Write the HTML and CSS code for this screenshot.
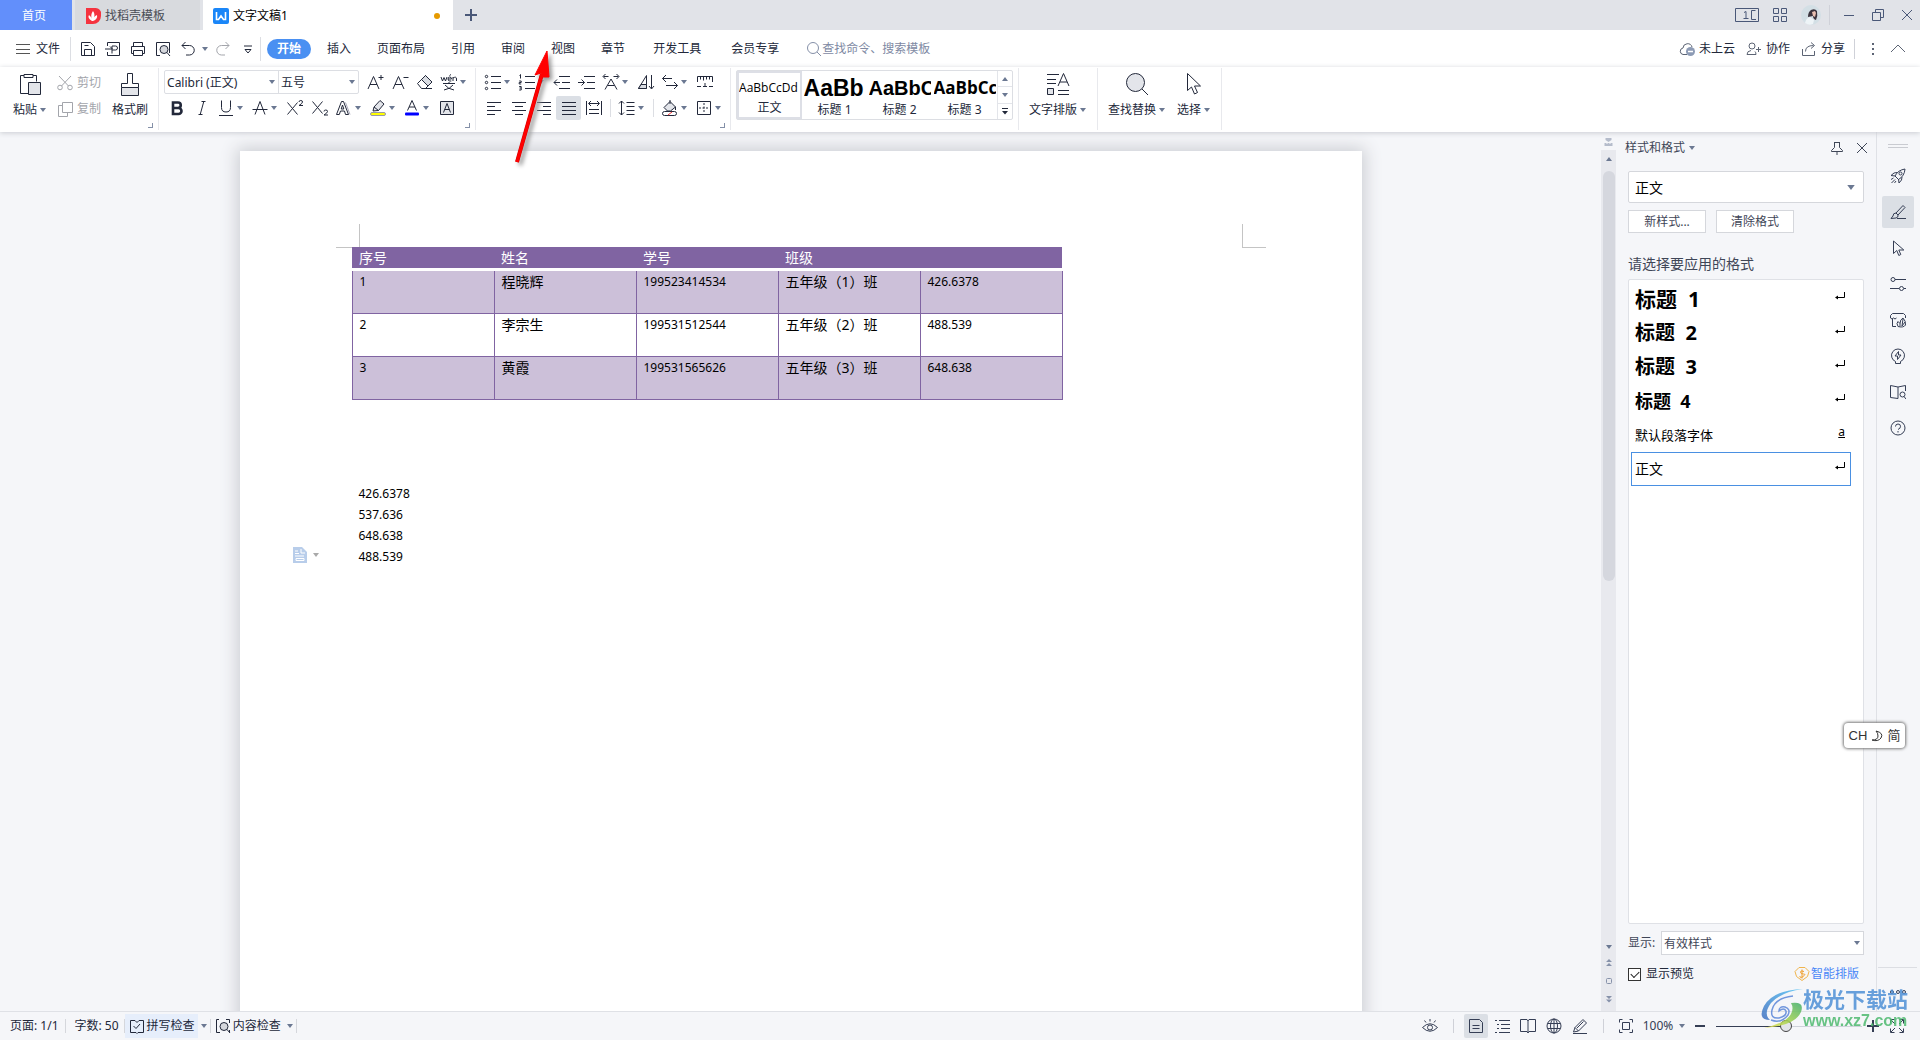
FILE: index.html
```html
<!DOCTYPE html>
<html lang="zh-CN">
<head>
<meta charset="utf-8">
<title>文字文稿1</title>
<link rel="stylesheet" href="styles.css">
</head>
<body>
<svg class="sprite" aria-hidden="true">
  <symbol id="caret" viewBox="0 0 6 4"><path d="M0 0h6L3 4z" fill="currentColor"/></symbol>
  <symbol id="menu" viewBox="0 0 14 12"><path d="M0 1.500h14M0 6.500h14M0 10.500h14"/></symbol>
  <symbol id="save" viewBox="0 0 16 16"><path d="M1.500 1.500h9l4 4v9h-13zM4.500 14.500V8.500h7v6M4.500 4.500h4"/></symbol>
  <symbol id="pdf" viewBox="0 0 16 16"><path d="M2.500 5V1.500h12v13h-12V11M0 8h7M5 5.500L7.500 8M7 12.500V5h3.500a2 2 0 0 1 0 4H7"/></symbol>
  <symbol id="print" viewBox="0 0 16 16"><path d="M3.500 5.500v-4h9v4M3.500 12.500h-2v-7h13v7h-2M3.500 9.500h9v5h-9z"/></symbol>
  <symbol id="preview" viewBox="0 0 16 16"><path d="M5 14.500H1.500v-13h13V12"/><circle cx="9" cy="8.500" r="4" fill="#d5d7dc"/><path d="M12 11.500l3 3.500"/></symbol>
  <symbol id="undo" viewBox="0 0 16 16"><path d="M5.500 1L2 4.500 5.500 8M2 4.500h7.500a4.500 4.500 0 0 1 0 9.500H6"/></symbol>
  <symbol id="redo" viewBox="0 0 16 16"><path d="M10.500 1L14 4.500 10.500 8M14 4.500H6.500a4.500 4.500 0 0 0 0 9.500H10"/></symbol>
  <symbol id="more" viewBox="0 0 10 10"><path d="M1 2h8M2 5.500h6L5 9z"/></symbol>
  <symbol id="search" viewBox="0 0 16 16"><circle cx="7" cy="7" r="5.500"/><path d="M11 11l4 4"/></symbol>
  <symbol id="cloud" viewBox="0 0 16 16"><path d="M8 13.500H4a3.300 3.300 0 0 1 0-6.500 4.600 4.600 0 0 1 9-1"/><circle cx="11.500" cy="10.500" r="4.500" fill="#8d9bb5" stroke="none"/><path d="M9 10.500h5" stroke="#fff" stroke-width="1.500"/></symbol>
  <symbol id="collab" viewBox="0 0 16 16"><circle cx="6" cy="5" r="3"/><path d="M5 9.500q-4 .5-4 4h9q0-2-1-3M10 8.500h5M12.500 6v5"/></symbol>
  <symbol id="share" viewBox="0 0 16 16"><path d="M1.500 8v6.500h12V10M4.500 10.500q0-6 8-6M10 1.500l3.500 3-3.500 3"/></symbol>
  <symbol id="plus" viewBox="0 0 12 12"><path d="M6 0v12M0 6h12" stroke-width="2"/></symbol>
  <symbol id="close" viewBox="0 0 12 12"><path d="M1 1l10 10M11 1L1 11"/></symbol>
  <symbol id="paste" viewBox="0 0 24 24"><path d="M6 3.500H2.500v18h8M15 3.500h3.500v6M6 2.500h9v3H6z"/><path d="M10.500 10.500h12v12h-12z" fill="#e3e5ea"/></symbol>
  <symbol id="cut" viewBox="0 0 16 16"><path d="M2 1l9.500 10M14 1L4.500 11"/><circle cx="3" cy="12.500" r="2.300"/><circle cx="13" cy="12.500" r="2.300"/></symbol>
  <symbol id="copy" viewBox="0 0 16 16"><path d="M5.500 1.500h10v10h-10zM5 4.500H1.500v11h9V12"/></symbol>
  <symbol id="painter" viewBox="0 0 24 24"><path d="M3.500 15.500h17v8h-17z" fill="#e3e5ea"/><path d="M3.500 15.500v-4h6v-10h5v10h6v4"/></symbol>
  <symbol id="grow" viewBox="0 0 18 18"><path d="M2 16L7.500 3.500 13 16M4 11.500h7M12.500 4.500h5M15 2v5"/></symbol>
  <symbol id="shrink" viewBox="0 0 18 18"><path d="M2 16L7.500 3.500 13 16M4 11.500h7M12.500 4.500h5"/></symbol>
  <symbol id="eraser" viewBox="0 0 18 18"><path d="M1.500 10.500l8-8 6.500 6.500-6.500 6.500H5.500z"/><path d="M5.500 6.500L9.500 2.500 16 9l-4 4z" fill="#d9dce2"/><path d="M8 15.500h8"/></symbol>
  <symbol id="pinyin" viewBox="0 0 18 18"><path d="M1 4l1.500 4L4 4.500 5.500 8 7 4M8 6h3.500q0-2-1.800-2T8 6t1.800 2h1.500M9.500 2.500l1.500-1M13 8V4M13 5q3.500-2 3.500 1v2M3 10.500h12M9 9v1.500M5 12q3 4 9 5M13 12q-3 4-9 5"/></symbol>
  <symbol id="bold" viewBox="0 0 18 18"><path d="M5 3.500h5a2.700 2.700 0 0 1 0 5.500H5zM5 9h5.500a3 3 0 0 1 0 6H5z" stroke-width="2.600"/></symbol>
  <symbol id="italic" viewBox="0 0 18 18"><path d="M8.500 2.500h4M5.500 15.500h4M10.800 2.500L7.200 15.500"/></symbol>
  <symbol id="underline" viewBox="0 0 18 18"><path d="M4.500 1.500v7q0 4.500 4.500 4.500t4.500-4.500v-7M2 16.500h14"/></symbol>
  <symbol id="strike" viewBox="0 0 18 18"><path d="M4 15.500L9 2.500l5 13M1.500 10.500h15"/></symbol>
  <symbol id="sup" viewBox="0 0 18 18"><path d="M1.500 3.500l10 12M11.500 3.500l-10 12M13 3q0-1.500 1.800-1.500T16.500 3t-3.500 3.500h4"/></symbol>
  <symbol id="sub" viewBox="0 0 18 18"><path d="M1.500 2.500l10 12M11.500 2.500l-10 12M13 12.500q0-1.500 1.800-1.500t1.700 1.500-3.500 3.500h4"/></symbol>
  <symbol id="outline" viewBox="0 0 18 18"><path d="M1.500 15.500l5-13h2l5 13h-3L9.500 12h-4l-1.200 3.500zM6.200 10h2.600L7.500 6z"/><path d="M10.500 3.500l4.500 12" stroke="#aab"/></symbol>
  <symbol id="highlight" viewBox="0 0 18 18"><path d="M4 12l1-4L11 1.500 15 5 9.500 11.500zM5 8l4.500 3.500" fill="#e3e5ea"/><rect x="1.500" y="13.500" width="15" height="3" rx="1.500" fill="#ff0" stroke="#99a"/></symbol>
  <symbol id="color" viewBox="0 0 18 18"><path d="M4.500 11.500L9 1.500l4.500 10M6 8h6"/><rect x="2" y="13.500" width="14" height="3" rx="1" fill="#00f" stroke="none"/></symbol>
  <symbol id="charbox" viewBox="0 0 18 18"><path d="M2.500 2.500h13v13h-13z" fill="#e3e5ea"/><path d="M5.500 13.500L9 4.500l3.500 9M6.800 10.500h4.500"/></symbol>
  <symbol id="bullets" viewBox="0 0 18 18"><path d="M7 3.500h10M7 9.500h10M7 15.500h10"/><circle cx="2.500" cy="3.500" r="1.200"/><circle cx="2.500" cy="9.500" r="1.200"/><circle cx="2.500" cy="15.500" r="1.200"/></symbol>
  <symbol id="numbers" viewBox="0 0 18 18"><path d="M7 3.500h10M7 9.500h10M7 15.500h10M1.500 2.500l1-1v4M1.200 8h2v1.500h-2V11h2M1.200 13.500h2V17h-2M1.500 15h1.700"/></symbol>
  <symbol id="outdent" viewBox="0 0 18 18"><path d="M6 3.500h11M9 9.500h8M6 15.500h11M7 9.500H1M4 6.500l-3 3 3 3"/></symbol>
  <symbol id="indent" viewBox="0 0 18 18"><path d="M6 3.500h11M9 9.500h8M6 15.500h11M0 9.500h6.500M3.500 6.500l3 3-3 3"/></symbol>
  <symbol id="scale" viewBox="0 0 18 18"><path d="M1.500 3.500h5M3.500 1L1 3.500 3.500 6M11.500 3.500h5M14.500 1L17 3.500 14.500 6M3 16.500L9 6l6 10.500M5.500 12.500h7"/></symbol>
  <symbol id="sort" viewBox="0 0 18 18"><path d="M1.500 15.500L9.500 2.500v13z"/><path d="M4 11.500h5.500v4H1.500z" fill="#d9dce2"/><path d="M14.500 2v13.500M12 13l2.500 3 2.500-3"/></symbol>
  <symbol id="wrap" viewBox="0 0 18 18"><path d="M5 2L1.500 5.500 5 9M1.500 5.500H11M5 12.500h11.500M13 9l3.500 3.500L13 16"/></symbol>
  <symbol id="tabstop" viewBox="0 0 18 18"><path d="M1.500 9V3.500h15V9M4.500 3.500v3M7.500 3.500v4M10.500 3.500v3M13.500 3.500v3M1 13.500h4M13 13.500h4M7 13.500h4M9 10v3"/></symbol>
  <symbol id="left" viewBox="0 0 18 18"><path d="M2 3.500h14M2 7.500h8M2 11.500h14M2 15.500h8"/></symbol>
  <symbol id="center" viewBox="0 0 18 18"><path d="M2 3.500h14M5 7.500h8M2 11.500h14M5 15.500h8"/></symbol>
  <symbol id="right" viewBox="0 0 18 18"><path d="M2 3.500h14M8 7.500h8M2 11.500h14M8 15.500h8"/></symbol>
  <symbol id="justify" viewBox="0 0 18 18"><path d="M2 3.500h14M2 7.500h14M2 11.500h14M2 15.500h14"/></symbol>
  <symbol id="distribute" viewBox="0 0 18 18"><path d="M1.500 2v14M16.500 2v14M4 4.500h10M6 2L3.500 4.500 6 7M12 2l2.500 2.500L12 7M4 10.500h10M4 14.500h10"/></symbol>
  <symbol id="spacing" viewBox="0 0 18 18"><path d="M3.500 2v14M1 4.500L3.500 2 6 4.500M1 13.500L3.500 16 6 13.500M8.500 3.500h8M8.500 7.500h8M8.500 11.500h8M8.500 15.500h8"/></symbol>
  <symbol id="shade" viewBox="0 0 18 18"><path d="M3 8.500l6-6 5.500 5.500-5 4h-3z" fill="#e3e5ea"/><path d="M9 1v4M14.500 8v3"/><rect x="1.500" y="12.500" width="14" height="4" rx="2" fill="#fff"/><path d="M7 16l4-3" stroke="#e33"/></symbol>
  <symbol id="borders" viewBox="0 0 18 18"><path d="M2.500 2.500h13v13h-13z"/><path d="M9 4v10M4 9h10" stroke-dasharray="2 1.500"/></symbol>
  <symbol id="typeset" viewBox="0 0 24 24"><path d="M1 2.500h12M1 7.500h9M1 11.500h9M12 14L17.500 1.500 23 14M14 10h7M12 18.500h11M12 22.500h11"/><path d="M1.500 16.500h6v6h-6z" fill="#e3e5ea"/></symbol>
  <symbol id="find" viewBox="0 0 24 24"><circle cx="10.500" cy="10.500" r="9" fill="#e3e5ea"/><path d="M17 17l6 6"/></symbol>
  <symbol id="pointer" viewBox="0 0 24 24"><path d="M5.500 1.500v17l4-3.500 3 7 3-1.500-3-6.500h6z"/></symbol>
  <symbol id="pin" viewBox="0 0 14 14"><path d="M4 1.500h6M4.500 1.500v5l-3 3v1h11v-1l-3-3v-5M7 10.500V14"/></symbol>
  <symbol id="rocket" viewBox="0 0 16 16"><path d="M5 8q3-6 10-7-.5 7-6.500 10.500zM5 8L1 7.500 4 5l3-.5M8.500 11l.5 4 2.500-3 .5-3M1 11.500L3.500 10M1.500 15L5 11.500M4.500 15L6 13"/><circle cx="10.500" cy="5.500" r="1.500"/></symbol>
  <symbol id="pen" viewBox="0 0 16 16"><path d="M6 9L13 1.500l2 2L8 11zM6 9q-3 0-3 3l-2 2.500 5-.5q2.500-.5 2-3M7 14.500h9"/></symbol>
  <symbol id="pencil" viewBox="0 0 16 16"><path d="M1.500 14L3 9.500 11 1.500l3.500 3.500-8 8zM3 9.500L6.500 13M5 10l6.500-6.500M1 15.500h14"/></symbol>
  <symbol id="cursor" viewBox="0 0 16 16"><path d="M3.500 1v12.500l3.300-3 2 5 2-1-2-4.500h5z"/></symbol>
  <symbol id="sliders" viewBox="0 0 16 16"><path d="M5 3.500h11M0 12.500h9M14 12.500h2"/><circle cx="3" cy="3.500" r="2"/><circle cx="11.500" cy="12.500" r="2"/></symbol>
  <symbol id="gallery" viewBox="0 0 16 16"><path d="M6 14.500H2.500V7M15.500 6V3.500l-2-2h-11l-2 2V6q1.500 2 3 0 1.500 2 3 0"/><path d="M8 14.500q-2-3.500 0-5l2 2q0-4 3-5.500 3 3 2.500 7-2 3-7.500 1.500zM10 11.500v3M13 7l-1 7M15 10l-3 4"/></symbol>
  <symbol id="bulb" viewBox="0 0 16 16"><path d="M5.500 15.500v-2a6.500 6.500 0 1 1 5 0v2zM8.500 3.500L5 8h2.500v3.500L11 7H8.500z"/></symbol>
  <symbol id="bookfind" viewBox="0 0 16 16"><path d="M8 14.500L.5 13.500v-12L8 3l7.500-1.500V7M8 3v11.500"/><circle cx="12.500" cy="10.500" r="2.500"/><path d="M14 12.500l2 2.500"/></symbol>
  <symbol id="help" viewBox="0 0 16 16"><circle cx="8" cy="8" r="7"/><path d="M5.500 6.500q0-2.500 2.500-2.500t2.500 2.300T8 9.500M8 11v1.500"/></symbol>
  <symbol id="spell" viewBox="0 0 16 16"><path d="M6 2.500H1.500v12H7l1 1 1-1h5.500v-12H10L8 4.500 6 2.500M4.500 8L7 10.500l4-4.500"/></symbol>
  <symbol id="content" viewBox="0 0 16 16"><path d="M4 1.500H1.500v13H5M11 1.500h3.500V5M14.500 12v2.500"/><circle cx="9" cy="8.500" r="4" fill="#d5d7dc"/><path d="M12 11.500l3 3.500"/></symbol>
  <symbol id="eye" viewBox="0 0 16 16"><path d="M.5 9.500Q8 2 15.500 9.500 8 17 .5 9.500zM8 1v2.500M2.500 2.500L4 4.500M13.500 2.500L12 4.500"/><circle cx="8" cy="9.500" r="2.500"/></symbol>
  <symbol id="doc" viewBox="0 0 16 16"><path d="M1.500 1.500h10l3 3v10h-13zM4.500 7.500h7M4.500 10.500h7"/></symbol>
  <symbol id="list" viewBox="0 0 16 16"><path d="M1 2.500h2M5 2.500h11M3 6.500h2M7 6.500h9M3 10.500h2M7 10.500h9M1 14.500h2M5 14.500h11"/></symbol>
  <symbol id="book" viewBox="0 0 16 16"><path d="M8 3v12l-1-1.500H.5v-12H7L8 3l1-1.500h6.500v12H9L8 15"/></symbol>
  <symbol id="globe" viewBox="0 0 16 16"><circle cx="8" cy="8" r="7"/><ellipse cx="8" cy="8" rx="3.500" ry="7"/><path d="M8 1v14M1.500 5.500h13M1.500 10.500h13"/></symbol>
  <symbol id="frame" viewBox="0 0 16 16"><path d="M1.500 4.500v-3h3M11.500 1.500h3v3M14.500 11.500v3h-3M4.500 14.500h-3v-3M4.500 4.500h7v7h-7z"/></symbol>
  <symbol id="full" viewBox="0 0 16 16"><path d="M1.500 5.500v-4h4M10.500 1.500h4v4M14.500 10.500v4h-4M5.500 14.500h-4v-4M2 2l4 4M14 2l-4 4M14 14l-4-4M2 14l4-4"/></symbol>
  <symbol id="return" viewBox="0 0 10 10"><path d="M9.500 1v5.500H1"/><path d="M0 6.500L3 4.500v4z" fill="currentColor" stroke="none"/></symbol>
</svg>

<header class="titlebar">
  <button class="tab home">首页</button>
  <button class="tab store">
    <svg class="i16" viewBox="0 0 16 16"><path d="M1 0h9a6 6 0 0 1 6 8 8 8 0 0 1-8 8H1z" fill="#f5333f" stroke="none"/><path d="M7 13Q2 10 4 7q2 1 3 5Q5 7 8 3q3 4 0 9 1-4 4-5 1 4-4 6z" fill="#fff" stroke="none"/></svg>
    找稻壳模板</button>
  <button class="tab current">
    <svg class="i16" viewBox="0 0 16 16"><rect width="16" height="16" rx="2" fill="#1a86f8" stroke="none"/><path d="M3.500 4v7.500h2L8 8l2.500 3.500h2V4" stroke="#fff" stroke-width="1.600"/></svg>
    文字文稿1<span class="dirty"></span></button>
  <button class="newtab" aria-label="新建"><svg class="i12"><use href="#plus"/></svg></button>
  <div class="window-tools">
    <button aria-label="窗口"><svg class="i24" viewBox="0 0 24 14"><path d="M.5.500h23v13H.5zM9 4.500l2-1v7M8.500 10.500h5M20.500 2.500h-4v9h4M19 11.500h2"/></svg></button>
    <button aria-label="应用"><svg class="i14" viewBox="0 0 14 14"><path d="M.5.500h5v5h-5zM8.500.500h5v5h-5zM.5 8.500h5v5h-5zM8.500 8.500h5v5h-5z"/></svg></button>
    <button aria-label="账号"><svg class="i20" viewBox="0 0 20 20"><circle cx="10" cy="10" r="10" fill="#d3dfe5" stroke="none"/><path d="M7 12q0-5 3-7 4-2 6 1 1 5-1 9-3-1-3-4z" fill="#39333c" stroke="none"/><path d="M11 7l3-1 1 2-1 4-2-1z" fill="#e8bfb0" stroke="none"/><path d="M4 18q1-5 5-6l4 3-1 4q-4 2-8-1z" fill="#eef4f7" stroke="none"/></svg></button>
    <span class="sep"></span>
    <button aria-label="最小化"><svg class="i12" viewBox="0 0 12 12"><path d="M1 6.500h10"/></svg></button>
    <button aria-label="还原"><svg class="i12" viewBox="0 0 12 12"><path d="M.5 3.500h8v8h-8zM3.500 3.500v-3h8v8h-3"/></svg></button>
    <button aria-label="关闭"><svg class="i12"><use href="#close"/></svg></button>
  </div>
</header>

<nav class="menubar">
  <button class="file"><svg class="menu-icon"><use href="#menu"/></svg>文件</button>
  <div class="quick">
    <button aria-label="保存"><svg class="i16"><use href="#save"/></svg></button>
    <button aria-label="输出为PDF"><svg class="i16"><use href="#pdf"/></svg></button>
    <button aria-label="打印"><svg class="i16"><use href="#print"/></svg></button>
    <button aria-label="打印预览"><svg class="i16"><use href="#preview"/></svg></button>
    <button aria-label="撤销"><svg class="i16"><use href="#undo"/></svg></button>
    <button class="narrow" aria-label="撤销列表"><svg class="caret"><use href="#caret"/></svg></button>
    <button class="disabled" aria-label="恢复"><svg class="i16"><use href="#redo"/></svg></button>
    <button aria-label="更多"><svg class="i10"><use href="#more"/></svg></button>
  </div>
  <div class="tabs">
    <button class="active">开始</button><button>插入</button><button>页面布局</button><button>引用</button><button>审阅</button><button>视图</button><button>章节</button><button class="wide">开发工具</button><button class="wide">会员专享</button>
  </div>
  <label class="search"><svg class="i16"><use href="#search"/></svg><input type="text" placeholder="查找命令、搜索模板"></label>
  <div class="account">
    <button class="link"><svg class="i16"><use href="#cloud"/></svg>未上云</button>
    <button class="link"><svg class="i16"><use href="#collab"/></svg>协作</button>
    <button><svg class="i16"><use href="#share"/></svg>分享</button>
    <span class="sep"></span>
    <button aria-label="更多"><svg class="dots" viewBox="0 0 4 14"><path d="M1 1h2v2H1zM1 6h2v2H1zM1 11h2v2H1z" fill="currentColor" stroke="none"/></svg></button>
    <button aria-label="收起"><svg class="i14" viewBox="0 0 14 14"><path d="M0 10l7-7 7 7"/></svg></button>
  </div>
</nav>

<section class="ribbon">
  <div class="group clipboard">
    <button class="big"><svg class="i24"><use href="#paste"/></svg><span>粘贴<svg class="caret"><use href="#caret"/></svg></span></button>
    <div class="stack">
      <button class="small disabled"><svg class="i16"><use href="#cut"/></svg>剪切</button>
      <button class="small disabled"><svg class="i16"><use href="#copy"/></svg>复制</button>
    </div>
    <button class="big"><svg class="i24"><use href="#painter"/></svg><span>格式刷</span></button>
    <i class="corner"></i>
  </div>
  <div class="group tools">
    <div class="row">
      <div class="fontbox">
        <span class="select font-name"><select aria-label="字体"><option>Calibri (正文)</option></select><svg class="caret"><use href="#caret"/></svg></span>
        <span class="select font-size"><select aria-label="字号"><option>五号</option></select><svg class="caret"><use href="#caret"/></svg></span>
      </div>
      <button class="tool" aria-label="增大字号"><svg><use href="#grow"/></svg></button>
      <button class="tool" aria-label="减小字号"><svg><use href="#shrink"/></svg></button>
      <button class="tool" aria-label="清除格式"><svg><use href="#eraser"/></svg></button>
      <button class="tool split" aria-label="拼音"><svg><use href="#pinyin"/></svg><svg class="caret"><use href="#caret"/></svg></button>
    </div>
    <div class="row">
      <button class="tool" aria-label="加粗"><svg><use href="#bold"/></svg></button>
      <button class="tool" aria-label="倾斜"><svg><use href="#italic"/></svg></button>
      <button class="tool split" aria-label="下划线"><svg><use href="#underline"/></svg><svg class="caret"><use href="#caret"/></svg></button>
      <button class="tool split" aria-label="删除线"><svg><use href="#strike"/></svg><svg class="caret"><use href="#caret"/></svg></button>
      <button class="tool" aria-label="上标"><svg><use href="#sup"/></svg></button>
      <button class="tool" aria-label="下标"><svg><use href="#sub"/></svg></button>
      <button class="tool split" aria-label="文字效果"><svg><use href="#outline"/></svg><svg class="caret"><use href="#caret"/></svg></button>
      <button class="tool split" aria-label="突出显示"><svg><use href="#highlight"/></svg><svg class="caret"><use href="#caret"/></svg></button>
      <button class="tool split" aria-label="字体颜色"><svg><use href="#color"/></svg><svg class="caret"><use href="#caret"/></svg></button>
      <button class="tool" aria-label="字符底纹"><svg><use href="#charbox"/></svg></button>
    </div>
    <i class="corner"></i>
  </div>
  <div class="group tools">
    <div class="row">
      <button class="tool split" aria-label="项目符号"><svg><use href="#bullets"/></svg><svg class="caret"><use href="#caret"/></svg></button>
      <button class="tool split" aria-label="编号"><svg><use href="#numbers"/></svg><svg class="caret"><use href="#caret"/></svg></button>
      <button class="tool" aria-label="减少缩进"><svg><use href="#outdent"/></svg></button>
      <button class="tool" aria-label="增加缩进"><svg><use href="#indent"/></svg></button>
      <button class="tool split" aria-label="中文版式"><svg><use href="#scale"/></svg><svg class="caret"><use href="#caret"/></svg></button>
      <button class="tool" aria-label="排序"><svg><use href="#sort"/></svg></button>
      <button class="tool split" aria-label="显示段落标记"><svg><use href="#wrap"/></svg><svg class="caret"><use href="#caret"/></svg></button>
      <button class="tool" aria-label="制表位"><svg><use href="#tabstop"/></svg></button>
    </div>
    <div class="row">
      <button class="tool" aria-label="左对齐"><svg><use href="#left"/></svg></button>
      <button class="tool" aria-label="居中"><svg><use href="#center"/></svg></button>
      <button class="tool" aria-label="右对齐"><svg><use href="#right"/></svg></button>
      <button class="tool pressed" aria-label="两端对齐"><svg><use href="#justify"/></svg></button>
      <button class="tool" aria-label="分散对齐"><svg><use href="#distribute"/></svg></button>
      <span class="vline"></span>
      <button class="tool split" aria-label="行距"><svg><use href="#spacing"/></svg><svg class="caret"><use href="#caret"/></svg></button>
      <span class="vline"></span>
      <button class="tool split" aria-label="底纹"><svg><use href="#shade"/></svg><svg class="caret"><use href="#caret"/></svg></button>
      <button class="tool split" aria-label="边框"><svg><use href="#borders"/></svg><svg class="caret"><use href="#caret"/></svg></button>
    </div>
    <i class="corner"></i>
  </div>
  <div class="group styles">
    <div class="style-gallery">
      <button class="chosen"><b class="s0">AaBbCcDd</b><span>正文</span></button>
      <button><b class="s1">AaBb</b><span>标题 1</span></button>
      <button><b class="s2">AaBbC</b><span>标题 2</span></button>
      <button><b class="s3">AaBbCc</b><span>标题 3</span></button>
      <div class="spin">
        <button aria-label="上一行"><svg class="caret up"><use href="#caret"/></svg></button>
        <button aria-label="下一行"><svg class="caret"><use href="#caret"/></svg></button>
        <button aria-label="展开"><svg class="i8" viewBox="0 0 8 8"><path d="M1 1.500h6"/><path d="M1 4h6L4 7.500z" fill="currentColor" stroke="none"/></svg></button>
      </div>
    </div>
  </div>
  <div class="group actions">
    <button class="big"><svg class="i24"><use href="#typeset"/></svg><span>文字排版<svg class="caret"><use href="#caret"/></svg></span></button>
  </div>
  <div class="group actions">
    <button class="big"><svg class="i24"><use href="#find"/></svg><span>查找替换<svg class="caret"><use href="#caret"/></svg></span></button>
    <button class="big"><svg class="i24"><use href="#pointer"/></svg><span>选择<svg class="caret"><use href="#caret"/></svg></span></button>
  </div>
</section>

<main class="workspace">
  <div class="canvas">
    <article class="paper">
      <i class="margin-mark mark-left"></i><i class="margin-mark mark-right"></i>
      <table>
        <thead><tr><th>序号</th><th>姓名</th><th>学号</th><th>班级</th><th></th></tr></thead>
        <tbody>
          <tr><td>1</td><td>程晓辉</td><td>199523414534</td><td>五年级（1）班</td><td>426.6378</td></tr>
          <tr><td>2</td><td>李宗生</td><td>199531512544</td><td>五年级（2）班</td><td>488.539</td></tr>
          <tr><td>3</td><td>黄霞</td><td>199531565626</td><td>五年级（3）班</td><td>648.638</td></tr>
        </tbody>
      </table>
      <div class="lines"><p>426.6378</p><p>537.636</p><p>648.638</p><p>488.539</p>
        <button class="paste-options" aria-label="粘贴选项"><svg class="i16" viewBox="0 0 16 16"><path d="M1 0h9l5 5v11H1z" fill="#b8cdea" stroke="none"/><path d="M9 2v4h4M3 4h3M3 6.500h4M3 9h9M4 11.500h8v2H4z" stroke="#fff"/></svg><svg class="caret"><use href="#caret"/></svg></button>
      </div>
    </article>
  </div>

  <div class="scrollbar">
    <svg class="ruler" viewBox="0 0 14 18"><path d="M4 6h6v2L7 10 4 8zM3 11h2v1h1v-1h2v1h1v-1h2v3H3z" fill="#b5bccb" stroke="none"/></svg>
    <svg class="caret up"><use href="#caret"/></svg>
    <div class="track"><div class="thumb"></div></div>
    <svg class="caret"><use href="#caret"/></svg>
    <svg class="i8" viewBox="0 0 8 8"><path d="M4 0l3 3H1zM4 4l3 3H1z" fill="currentColor" stroke="none"/></svg>
    <svg class="i8" viewBox="0 0 8 8"><rect x="1.500" y="1.500" width="5" height="5" rx="1"/></svg>
    <svg class="i8" viewBox="0 0 8 8"><path d="M1 1h6L4 4zM1 4.500h6l-3 3z" fill="currentColor" stroke="none"/></svg>
  </div>

  <aside class="panel">
    <div class="panel-head"><button class="title">样式和格式<svg class="caret"><use href="#caret"/></svg></button>
      <button aria-label="固定"><svg class="i14"><use href="#pin"/></svg></button>
      <button aria-label="关闭"><svg class="i12"><use href="#close"/></svg></button></div>
    <span class="select current-style"><select aria-label="当前样式"><option>正文</option></select><svg class="caret"><use href="#caret"/></svg></span>
    <div class="panel-buttons"><button>新样式...</button><button>清除格式</button></div>
    <h2>请选择要应用的格式</h2>
    <ul class="style-list">
      <li class="h1">标题  1<svg class="i10"><use href="#return"/></svg></li>
      <li class="h2">标题  2<svg class="i10"><use href="#return"/></svg></li>
      <li class="h2">标题  3<svg class="i10"><use href="#return"/></svg></li>
      <li class="h4">标题  4<svg class="i10"><use href="#return"/></svg></li>
      <li class="char">默认段落字体<u>a</u></li>
      <li class="selected">正文<svg class="i10"><use href="#return"/></svg></li>
    </ul>
    <div class="show"><label for="show">显示:</label><span class="select"><select id="show"><option>有效样式</option></select><svg class="caret"><use href="#caret"/></svg></span></div>
    <div class="foot"><label><input type="checkbox" checked>显示预览</label>
      <a href="#"><svg class="i16" viewBox="0 0 16 16"><path d="M5 1.500h6l4 4-1.500 5L8 14.500 2.500 10.500 1 5.500z" stroke="#f0b44c"/><path d="M10 5.500q-3.500-1.500-3.500.5t3 2-.5 2.500-3-.5M8 3.500v9" stroke="#f0a030"/></svg>智能排版</a></div>
  </aside>

  <aside class="sidebar">
    <i class="grip"></i>
    <button aria-label="快捷"><svg class="i16"><use href="#rocket"/></svg></button>
    <button class="pressed" aria-label="样式"><svg class="i16"><use href="#pen"/></svg></button>
    <button aria-label="选择"><svg class="i16"><use href="#cursor"/></svg></button>
    <button aria-label="属性"><svg class="i16"><use href="#sliders"/></svg></button>
    <button aria-label="素材"><svg class="i16"><use href="#gallery"/></svg></button>
    <button aria-label="推荐"><svg class="i16"><use href="#bulb"/></svg></button>
    <button aria-label="查阅"><svg class="i16"><use href="#bookfind"/></svg></button>
    <button aria-label="帮助"><svg class="i16"><use href="#help"/></svg></button>
    <div class="side-more"><button aria-label="更多"><svg class="i16" viewBox="0 0 16 16"><circle cx="2" cy="8" r="1.500"/><circle cx="8" cy="8" r="1.500"/><circle cx="14" cy="8" r="1.500"/></svg></button></div>
  </aside>
</main>

<footer class="statusbar">
  <span class="cell first">页面: 1/1</span>
  <span class="cell">字数: 50</span>
  <button class="check lit"><svg class="i16"><use href="#spell"/></svg>拼写检查</button><button class="drop" aria-label="拼写检查选项"><svg class="caret"><use href="#caret"/></svg></button>
  <button class="check"><svg class="i16"><use href="#content"/></svg>内容检查</button><button class="drop" aria-label="内容检查选项"><svg class="caret"><use href="#caret"/></svg></button>
  <div class="views">
    <button aria-label="护眼模式"><svg class="i16"><use href="#eye"/></svg></button>
    <span class="sep"></span>
    <button class="pressed" aria-label="页面视图"><svg class="i16"><use href="#doc"/></svg></button>
    <button aria-label="大纲"><svg class="i16"><use href="#list"/></svg></button>
    <button aria-label="阅读版式"><svg class="i16"><use href="#book"/></svg></button>
    <button aria-label="Web版式"><svg class="i16"><use href="#globe"/></svg></button>
    <button aria-label="写作模式"><svg class="i16"><use href="#pencil"/></svg></button>
    <span class="sep"></span>
    <button aria-label="适合页面"><svg class="i16"><use href="#frame"/></svg></button>
    <button class="percent">100%<svg class="caret"><use href="#caret"/></svg></button>
    <button class="step" aria-label="缩小"><svg class="i12" viewBox="0 0 12 12"><path d="M1 6h10" stroke-width="2"/></svg></button>
    <input type="range" min="0" max="100" value="48" aria-label="缩放">
    <button class="step" aria-label="放大"><svg class="i12"><use href="#plus"/></svg></button>
    <button class="fullscreen" aria-label="全屏"><svg class="i16"><use href="#full"/></svg></button>
  </div>
</footer>

<svg class="pointer-arrow" viewBox="0 0 60 130" aria-hidden="true"><path d="M17 122L42 34" stroke="#d00000" stroke-width="4"/><path d="M17 122L42 34" stroke="#ff0000" stroke-width="3"/><path d="M47 11L35 35l6-2 1 4 7 0z" fill="#ff0000" stroke="#ff0000"/></svg>
<div class="ime">CH<svg viewBox="0 0 12 12"><path d="M5 1q8 2 5 7-3 4-9 2 6 0 6-4 0-3-2-5z"/></svg>简</div>
<div class="watermark">
  <svg viewBox="0 0 42 42"><defs><linearGradient id="wb" x1="0" y1="1" x2="1" y2="0"><stop offset="0" stop-color="#3f6fc0"/><stop offset="1" stop-color="#55c4f5"/></linearGradient><linearGradient id="wg" x1="0" y1="1" x2="1" y2="0"><stop offset="0" stop-color="#f2e552"/><stop offset=".5" stop-color="#9ccf50"/><stop offset="1" stop-color="#3fae6b"/></linearGradient></defs>
    <path d="M42 1Q12 2 3 18-4 32 9 32 2 26 10 15 20 4 42 1z" fill="url(#wb)" stroke="none"/><path d="M30 15q14-2 10 9-6 14-37 16 22-5 27-14 3-6 0-11z" fill="url(#wg)" stroke="none"/><path d="M32 8Q14 10 11 22q-2 9 7 8 8-2 7-7-2-4-7 0 0-5 6-4 6 2 3 8-7 9-17 5" stroke="#5a86d8" stroke-width="1.500"/></svg>
  <div><strong>极光下载站</strong><em>www.xz7.com</em></div>
</div>
</body>
</html>
```

FILE: styles.css
```css
* { box-sizing: border-box; }
body {
  margin: 0;
  height: 100vh;
  display: flex;
  flex-direction: column;
  overflow: hidden;
  background: #f5f6f9;
  color: #22283a;
  font: 12px/18px "Noto Sans", "Noto Sans CJK SC", sans-serif;
}
button, input, select { font: inherit; color: inherit; }
button {
  border: 0;
  padding: 0;
  background: none;
  display: flex;
  align-items: center;
  justify-content: center;
  white-space: nowrap;
}
svg { fill: none; stroke: currentColor; flex: none; display: block; }
.sprite { position: absolute; width: 0; height: 0; }
.i8 { width: 8px; height: 8px; }
.i10 { width: 10px; height: 10px; }
.i12 { width: 12px; height: 12px; }
.i14 { width: 14px; height: 14px; }
.i16 { width: 16px; height: 16px; }
.i20 { width: 20px; height: 20px; }
.i24 { width: 24px; height: 24px; }
.caret { width: 6px; height: 4px; color: #6b7892; stroke: none; }
.up { transform: rotate(180deg); }
.disabled { color: #a3a5ab; }
.pressed { background: #dbdfe5; border-radius: 2px; }

/* title bar */
.titlebar { display: flex; height: 30px; flex: none; background: #e1e3e8; }
.tab { height: 30px; gap: 4px; padding-top: 1px; }
.home { width: 72px; margin-right: 3px; padding-right: 4px; background: #628ffb; color: #fff; }
.store { width: 125px; margin-right: 3px; padding-left: 10px; justify-content: flex-start; background: #d8dade; color: #4a4d56; }
.current { width: 250px; padding-right: 13px; padding-left: 10px; justify-content: flex-start; background: #fff; color: #000; }
.dirty { width: 6px; height: 6px; margin-left: auto; border-radius: 50%; background: #e69a00; }
.newtab { width: 36px; color: #4a5878; }
.window-tools { margin-left: auto; padding-right: 7px; display: flex; align-items: center; gap: 14px; color: #4a5878; }
.window-tools .sep { margin: 0 -4px 0 -6px; height: 20px; }
.window-tools .sep ~ button { margin-left: 3px; }
.sep { width: 1px; background: #cfd1d8; }

/* menu bar */
.menubar { display: flex; align-items: center; height: 37px; flex: none; padding-top: 1px; background: #fff; }
.file { padding: 0 10px 0 16px; gap: 6px; height: 24px; border-right: 1px solid #dcdee3; }
.menu-icon { width: 14px; height: 12px; color: #555; }
.quick { display: flex; padding-left: 4px; border-right: 1px solid #dcdee3; }
.quick button { width: 25px; height: 24px; }
.quick .narrow { width: 10px; }
.tabs { display: flex; align-items: center; padding-left: 3px; }
.tabs button { padding: 0 13px; }
.tabs .wide { padding: 0 15px; }
.tabs .active { margin: 0 3px; padding: 0 10px; height: 20px; border-radius: 10px; background: #4a90f2; color: #fff; font-weight: 700; }
.search { display: flex; align-items: center; margin-left: 12px; color: #8590a8; }
.search input { width: 160px; padding: 0; border: 0; outline: 0; background: none; }
.search input::placeholder { color: #7e89a3; opacity: 1; }
.account { display: flex; align-items: center; margin-left: auto; padding-right: 15px; gap: 9px; }
.account button { gap: 4px; }
.account .link { margin-right: 2px; }
.account svg { color: #5c6474; }
.account .sep { height: 20px; }
.account .dots { width: 4px; height: 14px; margin: 0 7px; }

/* ribbon */
.ribbon { display: flex; height: 65px; flex: none; background: #fff; position: relative; box-shadow: 0 1px 5px #c9ccd2; }
.group { position: relative; display: flex; height: 62px; margin-top: 1px; border-right: 1px solid #e8e9ed; }
.corner { position: absolute; right: 5px; bottom: 2px; width: 5px; height: 5px; border: solid #8490a8; border-width: 0 1px 1px 0; }
.clipboard { padding: 0 10px 0 13px; gap: 11px; }
.big { flex-direction: column; justify-content: flex-start; padding-top: 4px; }
.big span { display: flex; align-items: center; gap: 3px; line-height: 28px; }
.stack { padding-top: 2px; }
.small { height: 26px; gap: 4px; }
.tools { flex-direction: column; padding: 1px 4px 0 5px; }
.row { display: flex; align-items: center; height: 26px; }
.tool { width: 25px; height: 24px; }
.tool svg:first-child { width: 18px; height: 18px; }
.split { width: 34px; justify-content: flex-start; padding-left: 3px; gap: 2px; }
.vline { width: 1px; height: 18px; margin: 0 4px; background: #dcdee3; }
.fontbox { display: flex; width: 195px; height: 24px; margin-right: 3px; border: 1px solid #dcdee3; border-radius: 2px; }
.select { position: relative; display: block; }
.select select { appearance: none; width: 100%; height: 100%; padding: 1px 0 0 2px; border: 0; background: none; }
.select .caret { position: absolute; right: 3px; top: 50%; margin-top: -2px; pointer-events: none; }
.font-name { flex: 1; border-right: 1px solid #dcdee3; }
.font-size { width: 79px; }
.styles { padding: 0 5px; }
.style-gallery { display: flex; width: 277px; height: 50px; margin-top: 2px; border: 1px solid #dcdee3; border-radius: 2px; }
.style-gallery > button { width: 65px; flex-direction: column; }
.style-gallery .chosen { border: 2px solid #dddfe6; }
.style-gallery b { display: flex; align-items: center; width: 62px; height: 30px; padding-top: 3px; overflow: hidden; color: #000; font-family: "Liberation Sans", sans-serif; }
.style-gallery span { line-height: 18px; }
.style-gallery .s0 { width: 61px; font: 12px "Open Sans", sans-serif; }
.s1 { font-size: 23px; }
.s2 { font-size: 20px; }
.style-gallery .s3 { font: 700 17px "Open Sans", sans-serif; }
.spin { flex: 1; display: flex; flex-direction: column; border-left: 1px solid #e3e5ea; }
.spin button { flex: 1; }
.spin button + button { border-top: 1px solid #e3e5ea; }
.actions { padding: 0 11px 0 10px; gap: 12px; }

/* workspace */
.workspace { flex: 1; min-height: 0; display: flex; }
.canvas { flex: 1; min-width: 0; overflow: hidden; padding-top: 19px; }
.paper { position: relative; width: 1122px; min-height: 1587px; margin: 0 auto; padding: 96px 112px; background: #fff; box-shadow: 0 0 16px 3px #ccced3; color: #000; }
.margin-mark { position: absolute; top: 73px; width: 24px; height: 24px; border: solid #c4c4c4; }
.mark-left { left: 96px; border-width: 0 1px 1px 0; }
.mark-right { right: 96px; border-width: 0 0 1px 1px; }
table { position: relative; width: 711px; border-collapse: collapse; table-layout: fixed; line-height: 20px; }
th, td { padding: 1px 6px 0 7px; text-align: left; vertical-align: top; font-size: 14px; font-weight: 400; }
th { height: 22px; background: #8064a2; color: #fff; border-bottom: 3px solid #fff; }
td { height: 43px; border: 1px solid #8064a2; }
tbody tr:first-child td { border-top: 3px solid #fff; height: 44px; }
tbody tr:nth-child(odd) td { background: #ccc0d9; }
td:nth-child(odd) { font-size: 12px; }
.lines { position: relative; margin-top: 83px; padding-left: 7px; line-height: 21px; }
.lines p { margin: 0; }
.paste-options { position: absolute; left: -60px; bottom: 4px; gap: 5px; }
.paste-options .caret { color: #a9a9a9; }

.scrollbar { width: 15px; display: flex; flex-direction: column; align-items: center; gap: 10px; padding-bottom: 8px; background: #e8e9ee; color: #8792aa; }
.scrollbar .ruler { width: 15px; height: 18px; margin-bottom: -3px; background: #f5f6f9; }
.scrollbar .track { flex: 1; width: 12px; margin-bottom: 5px; }
.scrollbar .thumb { height: 54%; border-radius: 6px; background: #d5d7de; }

.panel { width: 260px; display: flex; flex-direction: column; padding: 0 12px; color: #3f4657; }
.panel-head { display: flex; gap: 12px; align-items: center; height: 30px; margin: 0 -4px 0 -3px; padding-top: 1px; }
.panel-head .title { gap: 4px; margin-right: auto; }
.current-style { height: 32px; margin-top: 9px; border: 1px solid #d5d7dc; border-radius: 2px; background: #fff; color: #000; font-size: 14px; }
.current-style select { padding-left: 6px; }
.current-style .caret { right: 8px; width: 8px; height: 5px; }
.panel-buttons { display: flex; gap: 10px; margin-top: 7px; }
.panel-buttons button { width: 78px; height: 23px; border: 1px solid #d5d7dc; background: #fff; }
.panel h2 { margin: 21px 0 5px; font-size: 14px; line-height: 20px; font-weight: 400; }
.style-list { flex: 1; margin: 0; padding: 2px; border: 1px solid #dfe1e6; border-radius: 2px; background: #fff; list-style: none; color: #000; }
.style-list li { display: flex; align-items: center; justify-content: space-between; width: 220px; height: 34px; padding: 0 5px 0 3px; border: 1px solid transparent; white-space: pre; }
.style-list svg, .style-list u { margin-top: -6px; }
.style-list .h1 { font-size: 21px; font-weight: 700; }
.style-list .h2 { font-size: 20px; font-weight: 700; }
.style-list .h4 { font-size: 18px; font-weight: 700; }
.style-list .selected { border-color: #4a90e2; font-size: 14px; }
.style-list .char { font-size: 13px; }
.style-list u { font-size: 12px; }
.show { display: flex; align-items: center; justify-content: space-between; margin-top: 7px; }
.show .select { width: 203px; height: 24px; border: 1px solid #d5d7dc; background: #fff; }
.foot { display: flex; justify-content: space-between; margin: 10px 5px 28px 0; color: #22283a; }
.foot label, .foot a { display: flex; align-items: center; gap: 5px; }
.foot a { gap: 1px; color: #4a86f7; text-decoration: none; }
.foot input { appearance: none; width: 13px; height: 13px; margin: 0; border: 1px solid #333; background: #fff; position: relative; }
.foot input::after { content: ""; position: absolute; left: 2px; top: 2px; width: 7px; height: 4px; border: solid #222; border-width: 0 0 1px 1px; transform: rotate(-45deg); }

.sidebar { width: 44px; display: flex; flex-direction: column; align-items: center; gap: 4px; padding: 12px 3px 3px 1px; border-left: 1px solid #dfe1e6; color: #353e55; }
.sidebar button { width: 32px; height: 32px; }
.grip { width: 20px; height: 4px; margin-bottom: 8px; border: solid #c9cbd1; border-width: 1px 0; }
.side-more { width: 100%; margin-top: auto; padding-top: 8px; display: flex; justify-content: center; border-top: 1px solid #dcdee3; }

/* status bar */
.statusbar { display: flex; align-items: center; height: 29px; flex: none; border-top: 1px solid #dfe1e6; }
.cell { padding: 0 5px 0 9px; line-height: 14px; border-right: 1px solid #d5d7dc; }
.first { padding: 0 6px 0 10px; }
.check { height: 24px; padding: 0 3px 0 4px; gap: 2px; }
.lit { background: #e6eefb; }
.drop { width: 13px; height: 14px; border-right: 1px solid #d5d7dc; }
.views { display: flex; align-items: center; margin-left: auto; padding-right: 11px; color: #353e55; }
.views button { width: 24px; height: 24px; margin-right: 2px; }
.views .sep { height: 14px; margin: 0 10px 0 9px; }
.views .percent { width: 48px; gap: 6px; }
.views .step { width: 20px; }
.views input { appearance: none; width: 146px; height: 12px; margin: 0 1px 0 4px; background: linear-gradient(90deg, #353e55 48%, #cfd2da 48%) center / 100% 1px no-repeat; }
.views input::-webkit-slider-thumb { appearance: none; width: 12px; height: 12px; border: 1px solid #444; border-radius: 50%; background: #e3e5ea; }
.views .fullscreen { margin: 0; }

/* overlays */
.pointer-arrow { position: absolute; left: 500px; top: 40px; width: 60px; height: 130px; filter: drop-shadow(3px 3px 2px #999); pointer-events: none; }
.ime { position: absolute; right: 15px; top: 723px; display: flex; align-items: center; justify-content: center; gap: 4px; width: 61px; height: 25px; border-radius: 4px; background: #fff; box-shadow: 0 0 3px 1px #777; font-family: "Liberation Sans", "Noto Sans CJK SC", sans-serif; font-size: 13px; color: #333; }
.ime svg { width: 12px; height: 12px; }
.watermark { position: absolute; right: 12px; bottom: 9px; display: flex; align-items: center; pointer-events: none; opacity: .85; }
.watermark svg { width: 42px; height: 42px; }
.watermark div { display: flex; flex-direction: column; }
.watermark strong { font-size: 21px; line-height: 24px; font-weight: 700; color: #4f90d6; }
.watermark em { font: 700 16px/20px "Liberation Sans", sans-serif; color: #4fba70; }
```
